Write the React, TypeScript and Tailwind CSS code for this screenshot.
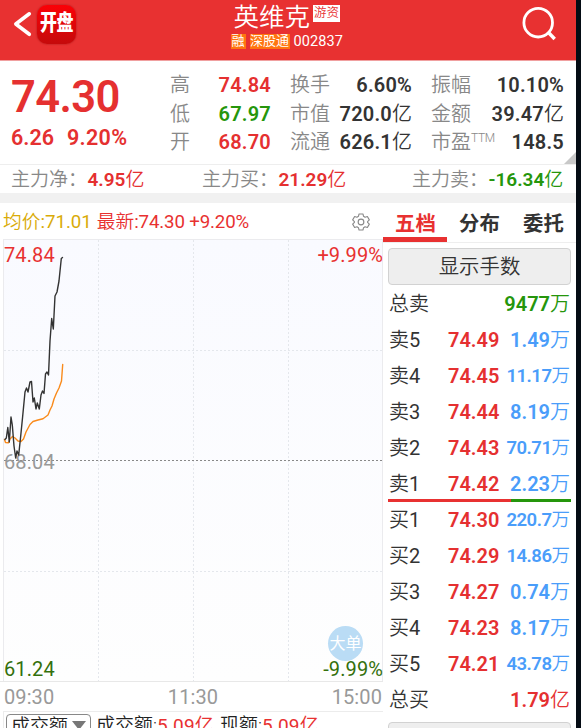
import { clsx } from "clsx";

type Tone = "red" | "green" | "dark" | "blue";

const tones: Record<Tone, string> = {
  red: "text-[#e53030]",
  green: "text-[#25960c]",
  dark: "text-[#333333]",
  blue: "text-[#4a9dfa]",
};

type FigureProps = {
  value: string;
  unit?: string;
  tone: Tone;
  className?: string;
};

function Figure({ value, unit, tone, className }: FigureProps) {
  return (
    <span className={clsx("whitespace-nowrap font-semibold", tones[tone], className)}>
      {value}
      {unit && <span className="font-[350] tracking-normal">{unit}</span>}
    </span>
  );
}

function Header() {
  return (
    <header className="relative flex h-[61px] justify-center border-b border-[#f0a0a0] bg-[#e83131] text-white">
      <div className="absolute left-3 top-1 flex items-center">
        <svg className="h-10 w-6" viewBox="0 0 24 40" fill="none">
          <path d="M17.3 9.8 3.8 20 17.3 30.3" stroke="#fff" strokeWidth="3.6" strokeLinecap="round" strokeLinejoin="round" />
        </svg>
        <div className="ml-px flex h-[39px] w-[39px] items-center justify-center rounded-[10px] bg-linear-to-b from-[#fb0006] to-[#c50a0b] shadow-[0_0_2px_#a01515]">
          <span className="scale-y-125 whitespace-nowrap text-[17px] font-black tracking-[-0.5px]">开盘</span>
        </div>
      </div>
      <div className="ml-[2px] flex w-[113px] flex-col">
        <div className="mt-[3px] flex h-[29px] items-center">
          <h1 className="ml-px whitespace-nowrap text-[25.5px] font-[350] leading-[29px]">英维克</h1>
          <span className="ml-[3px] -mt-2 flex h-[17px] w-[27px] shrink-0 items-center justify-center bg-white text-[12.5px] font-[350] text-[#e83131]">
            游资
          </span>
        </div>
        <div className="flex h-[18px] items-center whitespace-nowrap text-[13px]">
          <span className="-ml-[2px] flex h-[15px] w-[15px] shrink-0 items-center justify-center bg-[#ff7510]">融</span>
          <span className="ml-1 flex h-[15px] w-[40px] shrink-0 items-center justify-center bg-[#ff7510]">深股通</span>
          <span className="ml-[4px] mt-[2px] text-[14.5px] tracking-[0.1px]">002837</span>
        </div>
      </div>
      <svg className="absolute left-[520px] top-1 h-10 w-10" viewBox="0 0 40 40" fill="none" stroke="#fff">
        <circle cx="18.2" cy="18.7" r="14.3" strokeWidth="2.8" />
        <path d="m28 28 6.7 7" strokeWidth="3.4" />
      </svg>
    </header>
  );
}

type Stat = FigureProps & { label: string; note?: string };

const priceStats: Stat[] = [
  { label: "高", value: "74.84", tone: "red" },
  { label: "低", value: "67.97", tone: "green" },
  { label: "开", value: "68.70", tone: "red" },
];

const volumeStats: Stat[] = [
  { label: "换手", value: "6.60%", tone: "dark" },
  { label: "市值", value: "720.0", unit: "亿", tone: "dark" },
  { label: "流通", value: "626.1", unit: "亿", tone: "dark" },
];

const rangeStats: Stat[] = [
  { label: "振幅", value: "10.10%", tone: "dark" },
  { label: "金额", value: "39.47", unit: "亿", tone: "dark" },
  { label: "市盈", note: "TTM", value: "148.5", tone: "dark" },
];

function StatColumn({ stats, className }: { stats: Stat[]; className: string }) {
  return (
    <div className={clsx("flex shrink-0 flex-col pt-[10px]", className)}>
      {stats.map(({ label, note, ...figure }) => (
        <div key={label} className="flex h-[28.5px] items-center justify-between text-[20px] font-[350] text-[#888888]">
          <span className="flex whitespace-nowrap">
            {label}
            {note && <span className="-mt-px text-[12px] font-light leading-6 tracking-[-0.3px]">{note}</span>}
          </span>
          <Figure {...figure} className="tracking-[0.2px]" />
        </div>
      ))}
    </div>
  );
}

function Summary() {
  return (
    <section className="relative flex h-[103px]">
      <div className="w-[170px] shrink-0 pl-[11px] pt-[14px] text-[#e53030]">
        <div className="text-[43.5px] font-semibold leading-[46px] tracking-[-0.6px]">74.30</div>
        <div className="flex gap-[13px] text-[21.5px] font-semibold leading-[33px]">
          <span>6.26</span>
          <span className="tracking-[0.3px]">9.20%</span>
        </div>
      </div>
      <StatColumn stats={priceStats} className="w-[101px]" />
      <StatColumn stats={volumeStats} className="ml-[19px] w-[122px]" />
      <StatColumn stats={rangeStats} className="ml-[19px] w-[133px]" />
      <svg className="absolute bottom-0 right-0 h-3 w-3" viewBox="0 0 12 12">
        <path d="M12 0v12H0z" fill="#c8c8c8" />
      </svg>
    </section>
  );
}

const flows: Stat[] = [
  { label: "主力净：", value: "4.95", unit: "亿", tone: "red" },
  { label: "主力买：", value: "21.29", unit: "亿", tone: "red" },
  { label: "主力卖：", value: "-16.34", unit: "亿", tone: "green" },
];

function MoneyFlow() {
  return (
    <section className="grid h-[29px] grid-cols-[191px_210px_1fr] items-center border-t border-[#eeeeee] pl-[11px] pt-px">
      {flows.map(({ label, ...figure }) => (
        <div key={label} className="flex items-center whitespace-nowrap text-[19px] font-[350] text-[#888888]">
          <span>{label}</span>
          <Figure {...figure} className="ml-[0.5px]" />
        </div>
      ))}
    </section>
  );
}

function GearIcon() {
  return (
    <svg className="h-[18px] w-[18px]" viewBox="0 0 24 24" fill="none" stroke="#888" strokeWidth="1.5" strokeLinejoin="round">
      <path d="M9.4 1.3h5.2l.8 3.1 2 1.2 3.1-.9 2.6 4.5-2.3 2.2v1.2l2.3 2.2-2.6 4.5-3.1-.9-2 1.2-.8 3.1H9.4l-.8-3.1-2-1.2-3.1.9-2.6-4.5 2.3-2.2v-1.2L.9 9.2l2.6-4.5 3.1.9 2-1.2z" />
      <circle cx="12" cy="12" r="3.8" />
    </svg>
  );
}

function PriceChart() {
  return (
    <div className="relative h-[442px] text-[20px] leading-6">
      <svg className="absolute inset-0" width="383" height="442" fill="none">
        <defs>
          <linearGradient id="plot" x1="0" y1="0" x2="0" y2="1">
            <stop offset="0" stopColor="#f9faff" />
            <stop offset="1" stopColor="#fefefe" />
          </linearGradient>
        </defs>
        <rect x="3.5" y="0.5" width="379" height="442" fill="url(#plot)" stroke="#ebebee" />
        <path d="M98.5 1v441M193.5 1v441M288.5 1v441M4 111.5h379M4 332.5h379" stroke="#e4e7ec" strokeDasharray="2 2" />
        <path d="M4 221.5h379" stroke="#888" strokeDasharray="2 2" />
      </svg>
      <span className="absolute left-1 top-[4px] tracking-[0.1px] text-[#e83131]">74.84</span>
      <span className="absolute right-0 top-[4px] tracking-[0.1px] text-[#e83131]">+9.99%</span>
      <span className="absolute left-1 top-[211px] tracking-[0.1px] text-[#999999]">68.04</span>
      <span className="absolute bottom-0 left-1 tracking-[0.1px] text-[#34700c]">61.24</span>
      <svg className="absolute inset-0" width="383" height="442" fill="none" strokeLinejoin="round" strokeLinecap="round">
        <path
          d="M4.5 200.5 5.5 203.5 8.5 203.8 10 200 12.5 197.5 15 199 18 202 21 202.5 23.5 200 26 193 30 185.5 33 182.5 38 181 43 179.8 48 176 50 171 52 167 54 160 56.5 154 59 149 61.5 142 62.7 125.5"
          stroke="#f98b1c"
          strokeWidth="1.4"
        />
        <path
          d="M5 200.5 6.3 199 7.8 188.5 9.3 203 11 178 12.3 186 14 207 15.7 219 17 212 18.7 216 20.5 199 22.5 179 25 153 26.5 149 28 153 30 143 31.5 142.5 33 163 34.3 159 36 170 37.3 164 39.3 170 41 156 42.5 152 44 154.5 45.5 135 47 133 48.5 136 50 102 51.7 79.5 53.3 90 55 57 57 53 59 42 61.3 19.5 62.5 18.5"
          stroke="#333"
          strokeWidth="1.4"
        />
      </svg>
      <span className="absolute left-[328px] top-[387px] flex h-[35px] w-[35px] items-center justify-center whitespace-nowrap rounded-full bg-[#badcf5] text-[16px] text-white">
        大单
      </span>
      <span className="absolute bottom-0 right-0 tracking-[0.1px] text-[#34700c]">-9.99%</span>
    </div>
  );
}

function ChartPanel() {
  return (
    <section className="flex w-[383px] shrink-0 flex-col">
      <div className="flex h-9 items-center whitespace-nowrap pl-[3px] pr-[13px] pt-[2px] text-[18.7px] font-[350]">
        <span className="text-[#d9ab08]">
          均价<span className="font-normal">:71.01</span>
        </span>
        <span className="ml-[5px] text-[#e83131]">
          最新<span className="font-normal tracking-[-0.15px]">:74.30 +9.20%</span>
        </span>
        <span className="-mt-px ml-auto">
          <GearIcon />
        </span>
      </div>
      <PriceChart />
      <div className="flex h-[30px] items-center justify-between border-t border-[#e8e8e8] pl-1 pr-px text-[20px] tracking-[0.1px] text-[#999999]">
        <span>09:30</span>
        <span>11:30</span>
        <span>15:00</span>
      </div>
      <div className="ml-[3px] flex h-[17px] overflow-hidden whitespace-nowrap border-l border-t border-[#ececec] pl-[2px] text-[19px] font-[350] leading-[27px] text-[#222222]">
        <div className="mt-[2px] flex h-8 w-[85px] shrink-0 justify-between rounded border border-[#888888] pl-1 pr-1">
          <span className="leading-[23px]">成交额</span>
          <svg className="mt-[6px] h-[9px] w-[14px]" viewBox="0 0 14 9">
            <path d="M0 0h14L7 9z" fill="#777" />
          </svg>
        </div>
        <span className="ml-[5px]">
          成交额:<span className="text-[#e83131]"><span className="font-normal tracking-[0.2px]">5.09</span>亿</span>
        </span>
        <span className="ml-[6px]">
          现额:<span className="text-[#e83131]"><span className="font-normal tracking-[0.2px]">5.09</span>亿</span>
        </span>
      </div>
    </section>
  );
}

type Order = { label: string; price: string; amount: string };

const asks: Order[] = [
  { label: "卖5", price: "74.49", amount: "1.49" },
  { label: "卖4", price: "74.45", amount: "11.17" },
  { label: "卖3", price: "74.44", amount: "8.19" },
  { label: "卖2", price: "74.43", amount: "70.71" },
  { label: "卖1", price: "74.42", amount: "2.23" },
];

const bids: Order[] = [
  { label: "买1", price: "74.30", amount: "220.7" },
  { label: "买2", price: "74.29", amount: "14.86" },
  { label: "买3", price: "74.27", amount: "0.74" },
  { label: "买4", price: "74.23", amount: "8.17" },
  { label: "买5", price: "74.21", amount: "43.78" },
];

function OrderRow({ label, price, amount }: Order) {
  return (
    <div className="flex h-9 items-center">
      <span className="w-[59px] shrink-0">
        {label[0]}
        <span className="font-normal">{label[1]}</span>
      </span>
      <Figure value={price} tone="red" />
      <Figure
        value={amount}
        unit="万"
        tone="blue"
        className={clsx("ml-auto", amount.length > 4 && "pt-[2px] text-[18.5px] tracking-[-0.5px]")}
      />
    </div>
  );
}

function OrderBook() {
  return (
    <section className="flex w-[193px] shrink-0 flex-col">
      <nav className="flex h-10 border-b border-[#eeeeee] text-[20.4px] font-bold text-[#333333]">
        {["五档", "分布", "委托"].map((tab, i) => (
          <button
            key={tab}
            type="button"
            className={clsx("h-[39px] w-16 border-b-[5px] pl-px pt-[6px]", i === 0 ? "border-[#e83131] text-[#e83131]" : "border-transparent")}
          >
            {tab}
          </button>
        ))}
      </nav>
      <div className="ml-[5px] w-[183px] pt-[5px] text-[20px] font-[350] text-[#333333]">
        <button type="button" className="block h-[37px] w-full rounded border border-[#d2d2d2] bg-[#eeeeee] pt-[2px] text-[20.4px]">
          显示手数
        </button>
        <div className="mt-px pl-px pr-px">
          <div className="flex h-9 items-center justify-between">
            <span>总卖</span>
            <Figure value="9477" unit="万" tone="green" />
          </div>
          {asks.map((order) => (
            <OrderRow key={order.label} {...order} />
          ))}
        </div>
        <div className="-mt-[3px] flex h-[3px]">
          <div className="w-[123px] bg-[#e83131]" />
          <div className="flex-1 bg-[#25960c]" />
        </div>
        <div className="pl-px pr-px">
          {bids.map((order) => (
            <OrderRow key={order.label} {...order} />
          ))}
          <div className="flex h-9 items-center justify-between">
            <span>总买</span>
            <Figure value="1.79" unit="亿" tone="red" />
          </div>
        </div>
        <div className="mt-1 h-8 rounded border border-[#d2d2d2] bg-[#eeeeee]" />
      </div>
    </section>
  );
}

export default function App() {
  return (
    <div className="h-[728px] w-[581px] overflow-hidden bg-[#050c14] font-[Roboto,'Noto_Sans_CJK_SC',sans-serif]">
      <main className="h-[728px] w-[576px] overflow-hidden bg-white">
        <Header />
        <Summary />
        <MoneyFlow />
        <div className="h-[10px] bg-[#f1f1f1]" />
        <div className="flex">
          <ChartPanel />
          <OrderBook />
        </div>
      </main>
    </div>
  );
}
